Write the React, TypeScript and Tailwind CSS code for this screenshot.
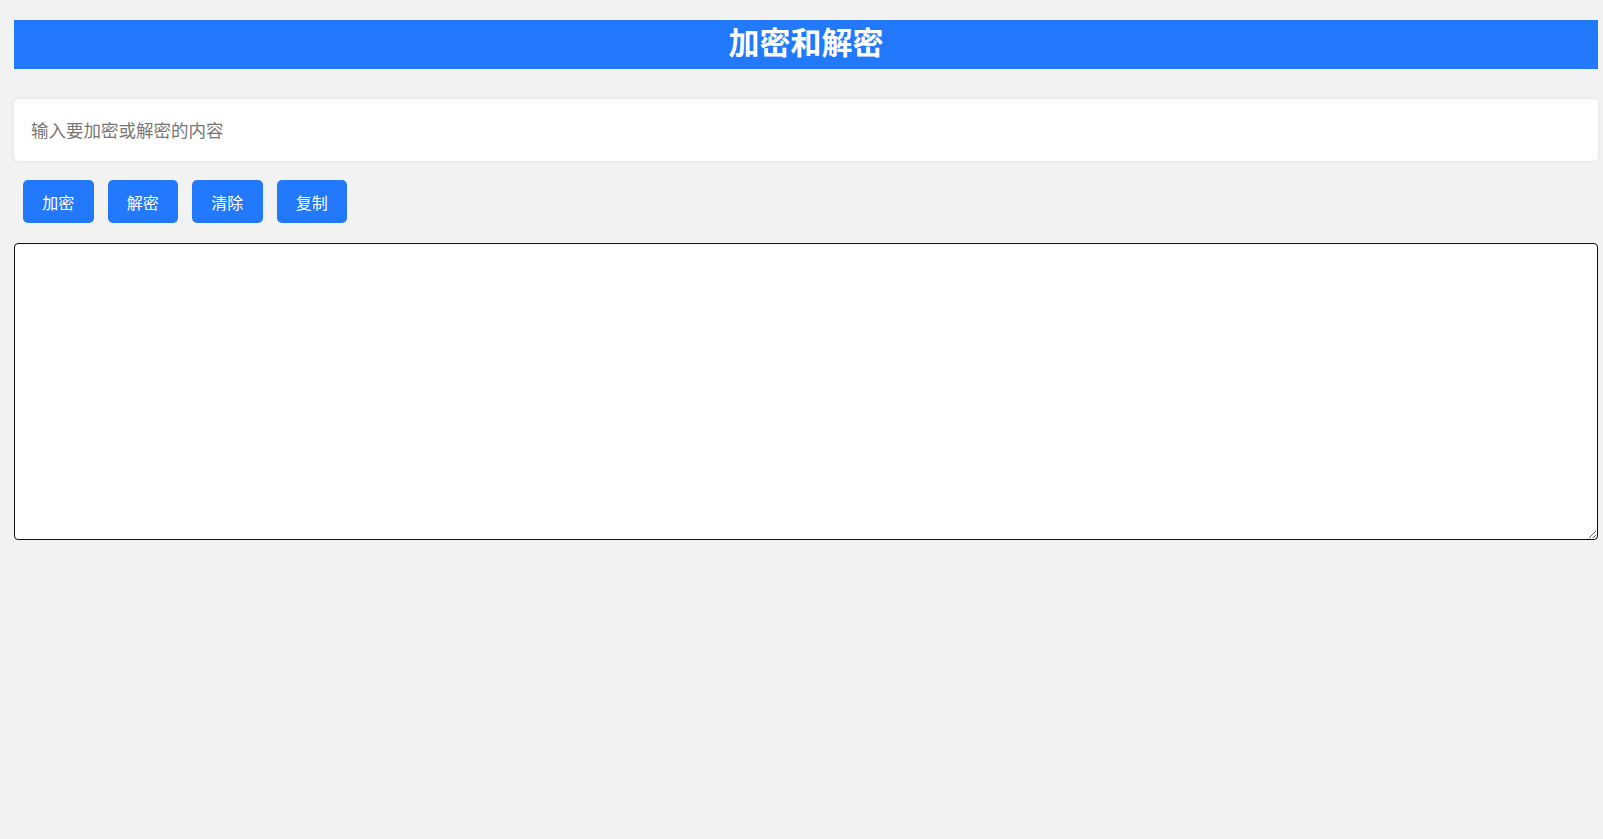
import React, { useState } from "react";

export default function App() {
  const [text, setText] = useState("");
  const [out, setOut] = useState("");
  const font = { fontFamily: '"Noto Sans CJK SC", "Noto Sans", sans-serif' };
  return (
    <div className="min-h-[839px] w-full bg-[#f2f2f2] pt-[20px] pl-[14px] pr-[5px]" style={font}>
      <div className="flex h-[49px] items-start justify-center bg-[#2279fb] pt-[4px]">
        <h1 className="text-[31px] font-bold leading-[34px] text-white">加密和解密</h1>
      </div>
      <div className="mt-[30px] h-[62px] rounded-[5px] bg-white shadow-[0_0_4px_rgba(0,0,0,0.08)]">
        <input
          value={text}
          onChange={(e) => setText(e.target.value)}
          placeholder="输入要加密或解密的内容"
          className="h-full w-full rounded-[5px] bg-transparent px-[17px] pb-[2px] text-[17.5px] text-[#333] outline-none placeholder:text-[#777]"
        />
      </div>
      <div className="mt-[19px] flex gap-[14px] pl-[9px]">
        {["加密", "解密", "清除", "复制"].map((b) => (
          <button
            key={b}
            className="flex h-[43px] w-[70.5px] items-center justify-center rounded-[5px] bg-[#2279fb] text-[16px] text-white"
          >
            {b}
          </button>
        ))}
      </div>
      <textarea
        value={out}
        onChange={(e) => setOut(e.target.value)}
        className="mt-[20px] block h-[297px] w-full rounded-[4px] border-[1.5px] border-[#111] bg-white outline-none"
      />
    </div>
  );
}
